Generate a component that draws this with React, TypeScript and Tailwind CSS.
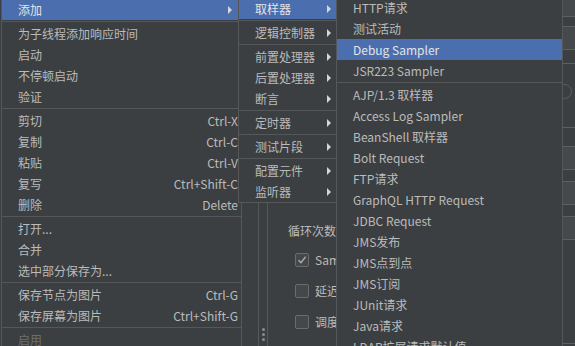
import React from "react";

type Item =
  | { sep: true }
  | { label: string; shortcut?: string; sub?: boolean; active?: boolean; disabled?: boolean };

const mainMenu: Item[] = [
  { label: "添加", sub: true, active: true },
  { sep: true },
  { label: "为子线程添加响应时间" },
  { label: "启动" },
  { label: "不停顿启动" },
  { label: "验证" },
  { sep: true },
  { label: "剪切", shortcut: "Ctrl-X" },
  { label: "复制", shortcut: "Ctrl-C" },
  { label: "粘贴", shortcut: "Ctrl-V" },
  { label: "复写", shortcut: "Ctrl+Shift-C" },
  { label: "删除", shortcut: "Delete" },
  { sep: true },
  { label: "打开..." },
  { label: "合并" },
  { label: "选中部分保存为..." },
  { sep: true },
  { label: "保存节点为图片", shortcut: "Ctrl-G" },
  { label: "保存屏幕为图片", shortcut: "Ctrl+Shift-G" },
  { sep: true },
  { label: "启用", disabled: true },
];

const addMenu: Item[] = [
  { label: "取样器", sub: true, active: true },
  { sep: true },
  { label: "逻辑控制器", sub: true },
  { sep: true },
  { label: "前置处理器", sub: true },
  { label: "后置处理器", sub: true },
  { label: "断言", sub: true },
  { sep: true },
  { label: "定时器", sub: true },
  { sep: true },
  { label: "测试片段", sub: true },
  { sep: true },
  { label: "配置元件", sub: true },
  { label: "监听器", sub: true },
];

const samplerMenu: Item[] = [
  { label: "HTTP请求" },
  { label: "测试活动" },
  { label: "Debug Sampler", active: true },
  { label: "JSR223 Sampler" },
  { sep: true },
  { label: "AJP/1.3 取样器" },
  { label: "Access Log Sampler" },
  { label: "BeanShell 取样器" },
  { label: "Bolt Request" },
  { label: "FTP请求" },
  { label: "GraphQL HTTP Request" },
  { label: "JDBC Request" },
  { label: "JMS发布" },
  { label: "JMS点到点" },
  { label: "JMS订阅" },
  { label: "JUnit请求" },
  { label: "Java请求" },
  { label: "LDAP扩展请求默认值" },
];

function Arrow() {
  return (
    <svg width="4" height="8" viewBox="0 0 4 8" className="shrink-0">
      <polygon points="0,0 4,4 0,8" fill="#d6d6d6" />
    </svg>
  );
}

function Menu({ items, arrowGap }: { items: Item[]; arrowGap: string }) {
  return (
    <div className="flex flex-col">
      {items.map((it, i) =>
        "sep" in it ? (
          <div key={i} className="h-[3px] py-px">
            <div className="h-px bg-[#555759]" />
          </div>
        ) : (
          <div
            key={i}
            className={`h-[21px] shrink-0 flex items-center pl-[16px] whitespace-nowrap ${
              it.active ? "bg-[#4b6eaf] text-[#e4e4e4]" : it.disabled ? "text-[#6e6e6e]" : "text-[#bbbbbb]"
            }`}
          >
            <span>{it.label}</span>
            {it.shortcut && <span className="ml-auto pl-6 pr-[3px]">{it.shortcut}</span>}
            {it.sub && (
              <span className={`ml-auto ${arrowGap}`}>
                <Arrow />
              </span>
            )}
          </div>
        )
      )}
    </div>
  );
}

function Check({ checked }: { checked?: boolean }) {
  return (
    <div className="w-[14px] h-[14px] shrink-0 rounded-[2px] border border-[#6b6b6b] bg-[#43494a] flex items-center justify-center">
      {checked && (
        <svg width="10" height="10" viewBox="0 0 10 10">
          <path d="M1.5 5.2 L4 7.6 L8.6 1.8" stroke="#a9a9a9" strokeWidth="1.4" fill="none" />
        </svg>
      )}
    </div>
  );
}

export default function App() {
  return (
    <div
      className="relative w-[575px] h-[346px] overflow-hidden bg-[#3c3f41] text-[12px] leading-none"
      style={{ fontFamily: '"Noto Sans CJK SC", "Noto Sans", sans-serif' }}
    >
      {/* background window */}
      <div className="flex h-full">
        <div className="w-[258px] shrink-0" />
        <div className="w-[10px] shrink-0 border-l border-r border-[#555759] flex flex-col justify-end items-center pb-[5px] gap-[2px]">
          <span className="w-[3px] h-[3px] rounded-full bg-[#8c8c8c]" />
          <span className="w-[3px] h-[3px] rounded-full bg-[#8c8c8c]" />
          <span className="w-[3px] h-[3px] rounded-full bg-[#8c8c8c]" />
        </div>
        <div className="flex-1 flex">
          {/* visible part of the form, the rest sits under the popup */}
          <div className="w-[68px] overflow-hidden whitespace-nowrap flex flex-col pl-[20px] pt-[222px] text-[#bbbbbb]">
            <div className="h-[17px] flex items-center">循环次数</div>
            <div className="mt-[14px] flex items-center gap-[6px] pl-[7px]">
              <Check checked />
              <span>Sam</span>
            </div>
            <div className="mt-[17px] flex items-center gap-[6px] pl-[7px]">
              <Check />
              <span>延迟</span>
            </div>
            <div className="mt-[17px] flex items-center gap-[6px] pl-[7px]">
              <Check />
              <span>调度</span>
            </div>
          </div>
        </div>
        <div className="w-[12px] shrink-0 flex flex-col relative">
          <div className="h-[17px] bg-[#46494b] border-b border-[#5e6060]" />
          <div className="h-[10px] border-b border-[#5e6060]" />
          <div className="h-[23px] bg-[#46494b] border-b border-[#5e6060]" />
          <div className="h-[14px] border-b border-[#5e6060]" />
          <div className="h-[64px] border-b border-[#5e6060]" />
          <div className="h-[19px] border-b border-[#5e6060]" />
          <div className="h-[23px] bg-[#46494b] border-b border-[#5e6060]" />
          <div className="h-[12px] border-b border-[#5e6060]" />
          <div className="h-[23px] bg-[#46494b] border-b border-[#5e6060]" />
          <div className="h-[12px] border-b border-[#5e6060]" />
          <div className="h-[23px] bg-[#46494b] border-b border-[#5e6060]" />
          <div className="h-[104px] border-b border-[#5e6060]" />
          <div className="absolute left-[-7px] top-[84px] w-[16px] h-[15px] rounded-full border border-[#5e6060]" />
        </div>
      </div>

      {/* popup menus */}
      <div className="absolute left-[1px] top-[-2px] w-[241px] border border-[#555759] bg-[#3c3f41]">
        <Menu items={mainMenu} arrowGap="mr-[9px]" />
      </div>
      <div className="absolute left-[238px] top-[-3px] w-[99px] border border-[#555759] bg-[#3c3f41]">
        <Menu items={addMenu} arrowGap="mr-[5px]" />
      </div>
      <div className="absolute left-[336px] top-[-4px] w-[227px] border border-[#555759] bg-[#3c3f41]">
        <Menu items={samplerMenu} arrowGap="mr-[5px]" />
      </div>
    </div>
  );
}
